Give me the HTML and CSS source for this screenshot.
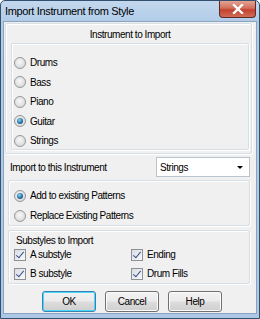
FILE: index.html
```html
<!DOCTYPE html>
<html>
<head>
<meta charset="utf-8">
<link rel="stylesheet" href="styles.css">
</head>
<body>
<div class="window">
  <div class="titlebar">
    <span class="title">Import Instrument from Style</span>
    <div class="close">
      <svg width="12" height="10" viewBox="0 0 12 10"><path d="M2 1 L10 9 M10 1 L2 9" stroke="#fff" stroke-width="2.4" stroke-linecap="square"/></svg>
    </div>
  </div>
  <div class="client">
    <div class="group group-inst">
      <div class="group-title">Instrument to Import</div>
      <div class="inner">
        <label class="opt"><span class="radio"></span>Drums</label>
        <label class="opt"><span class="radio"></span>Bass</label>
        <label class="opt"><span class="radio"></span>Piano</label>
        <label class="opt"><span class="radio on"></span>Guitar</label>
        <label class="opt"><span class="radio"></span>Strings</label>
      </div>
    </div>
    <div class="target">
      <span>Import to this Instrument</span>
      <div class="select"><span>Strings</span><span class="arrow"></span></div>
    </div>
    <div class="group group-mode">
      <label class="opt"><span class="radio on"></span>Add to existing Patterns</label>
      <label class="opt"><span class="radio"></span>Replace Existing Patterns</label>
    </div>
    <div class="group group-sub">
      <div class="sub-title">Substyles to Import</div>
      <div class="checks">
        <label class="opt"><span class="check"></span>A substyle</label>
        <label class="opt"><span class="check"></span>Ending</label>
        <label class="opt"><span class="check"></span>B substyle</label>
        <label class="opt"><span class="check"></span>Drum Fills</label>
      </div>
    </div>
    <div class="buttons">
      <div class="btn default">OK</div>
      <div class="btn">Cancel</div>
      <div class="btn">Help</div>
    </div>
  </div>
</div>
</body>
</html>
```
FILE: styles.css
```css
* { box-sizing: border-box; }
html, body { margin: 0; padding: 0; }
body {
  font-family: "Liberation Sans", Arial, sans-serif;
  font-size: 10px;
  letter-spacing: -0.45px;
  color: #000;
  background: #fff;
}
.window {
  width: 260px;
  height: 319px;
  border: 1px solid #34506f;
  border-radius: 5px 5px 0 0;
  background: linear-gradient(#c3d8ee, #b2cce8 20px, #adc8e6);
  display: flex;
  flex-direction: column;
  padding: 0 2px 4px 2px;
}
.titlebar {
  height: 20px;
  flex: none;
  display: flex;
  align-items: flex-start;
  justify-content: space-between;
}
.title {
  font-size: 11px;
  letter-spacing: -0.35px;
  padding: 4px 0 0 2px;
  color: #000;
}
.close {
  width: 37px;
  height: 17px;
  margin-right: 1px;
  border: 1px solid #5c2a28;
  border-top: none;
  border-radius: 0 0 4px 4px;
  background: linear-gradient(#e3a394, #d16f5d 45%, #c4412e 55%, #d06d56);
  display: flex;
  align-items: center;
  justify-content: center;
}
.client {
  flex: 1;
  background: #f0f0f0;
  border: 1px solid #8aa3bf;
  display: flex;
  flex-direction: column;
}
.group {
  border: 1px solid #d5dfe5;
  border-radius: 2px;
  box-shadow: inset 1px 1px 0 #fff, 1px 1px 0 #fff;
}
.group-inst {
  height: 131px;
  margin: 1px 4px 0 1px;
  padding: 0 2px 3px 5px;
  display: flex;
  flex-direction: column;
}
.group-title {
  text-align: center;
  height: 19px;
  padding-top: 5px;
}
.inner {
  flex: 1;
  border: 1px solid #d5dfe5;
  border-radius: 2px;
  box-shadow: inset 1px 1px 0 #fff, 1px 1px 0 #fff;
  padding: 12px 0 0 2px;
  display: flex;
  flex-direction: column;
  gap: 6.5px;
}
.opt {
  display: flex;
  align-items: center;
  height: 13px;
  gap: 4px;
}
.radio {
  width: 12px;
  height: 12px;
  border-radius: 50%;
  border: 1px solid #959799;
  background: radial-gradient(circle at 45% 40%, #f8f8f8, #d8d8d8 80%);
  flex: none;
  position: relative;
}
.radio.on::after {
  content: "";
  position: absolute;
  left: 2px;
  top: 2px;
  width: 6px;
  height: 6px;
  border-radius: 50%;
  background: radial-gradient(circle at 40% 35%, #8fd3f5, #1f6aa0 60%, #0e3a62);
}
.target {
  height: 26px;
  display: flex;
  align-items: center;
  justify-content: space-between;
  padding: 0 6px 0 6px;
}
.select {
  width: 94px;
  height: 20px;
  background: #fff;
  border: 1px solid #b9c3cd;
  display: flex;
  align-items: center;
  justify-content: space-between;
  padding: 0 6px 0 3px;
}
.arrow {
  width: 0;
  height: 0;
  border-left: 3px solid transparent;
  border-right: 3px solid transparent;
  border-top: 3px solid #000;
}
.group-mode {
  margin: 0 6px 0 4px;
  height: 46px;
  padding: 8px 0 0 5px;
  display: flex;
  flex-direction: column;
  gap: 7px;
}
.group-sub {
  margin: 4px 6px 0 4px;
  height: 54px;
  padding: 4px 0 0 5px;
}
.sub-title {
  padding-left: 2px;
  height: 13px;
}
.checks {
  display: grid;
  grid-template-columns: 117px 1fr;
  row-gap: 6px;
}
.check {
  width: 12px;
  height: 12px;
  border: 1px solid #8d9095;
  background: linear-gradient(135deg, #d8dde2, #f8f9fa);
  flex: none;
  position: relative;
}
.check::after {
  content: "";
  position: absolute;
  left: 3px;
  top: 0px;
  width: 3px;
  height: 7px;
  border-right: 1.6px solid #3b4f89;
  border-bottom: 1.6px solid #3b4f89;
  transform: rotate(40deg);
}
.buttons {
  display: flex;
  gap: 9px;
  padding: 7px 0 0 38px;
}
.btn {
  width: 54px;
  height: 21px;
  border: 1px solid #707070;
  border-radius: 3px;
  background: linear-gradient(#f2f2f2, #ebebeb 48%, #dddddd 52%, #cfcfcf);
  box-shadow: inset 0 0 0 1px #fcfcfc;
  display: flex;
  align-items: center;
  justify-content: center;
}
.btn.default {
  border-color: #3c7fb1;
  box-shadow: inset 0 0 0 1px #48d8fb;
}
```
